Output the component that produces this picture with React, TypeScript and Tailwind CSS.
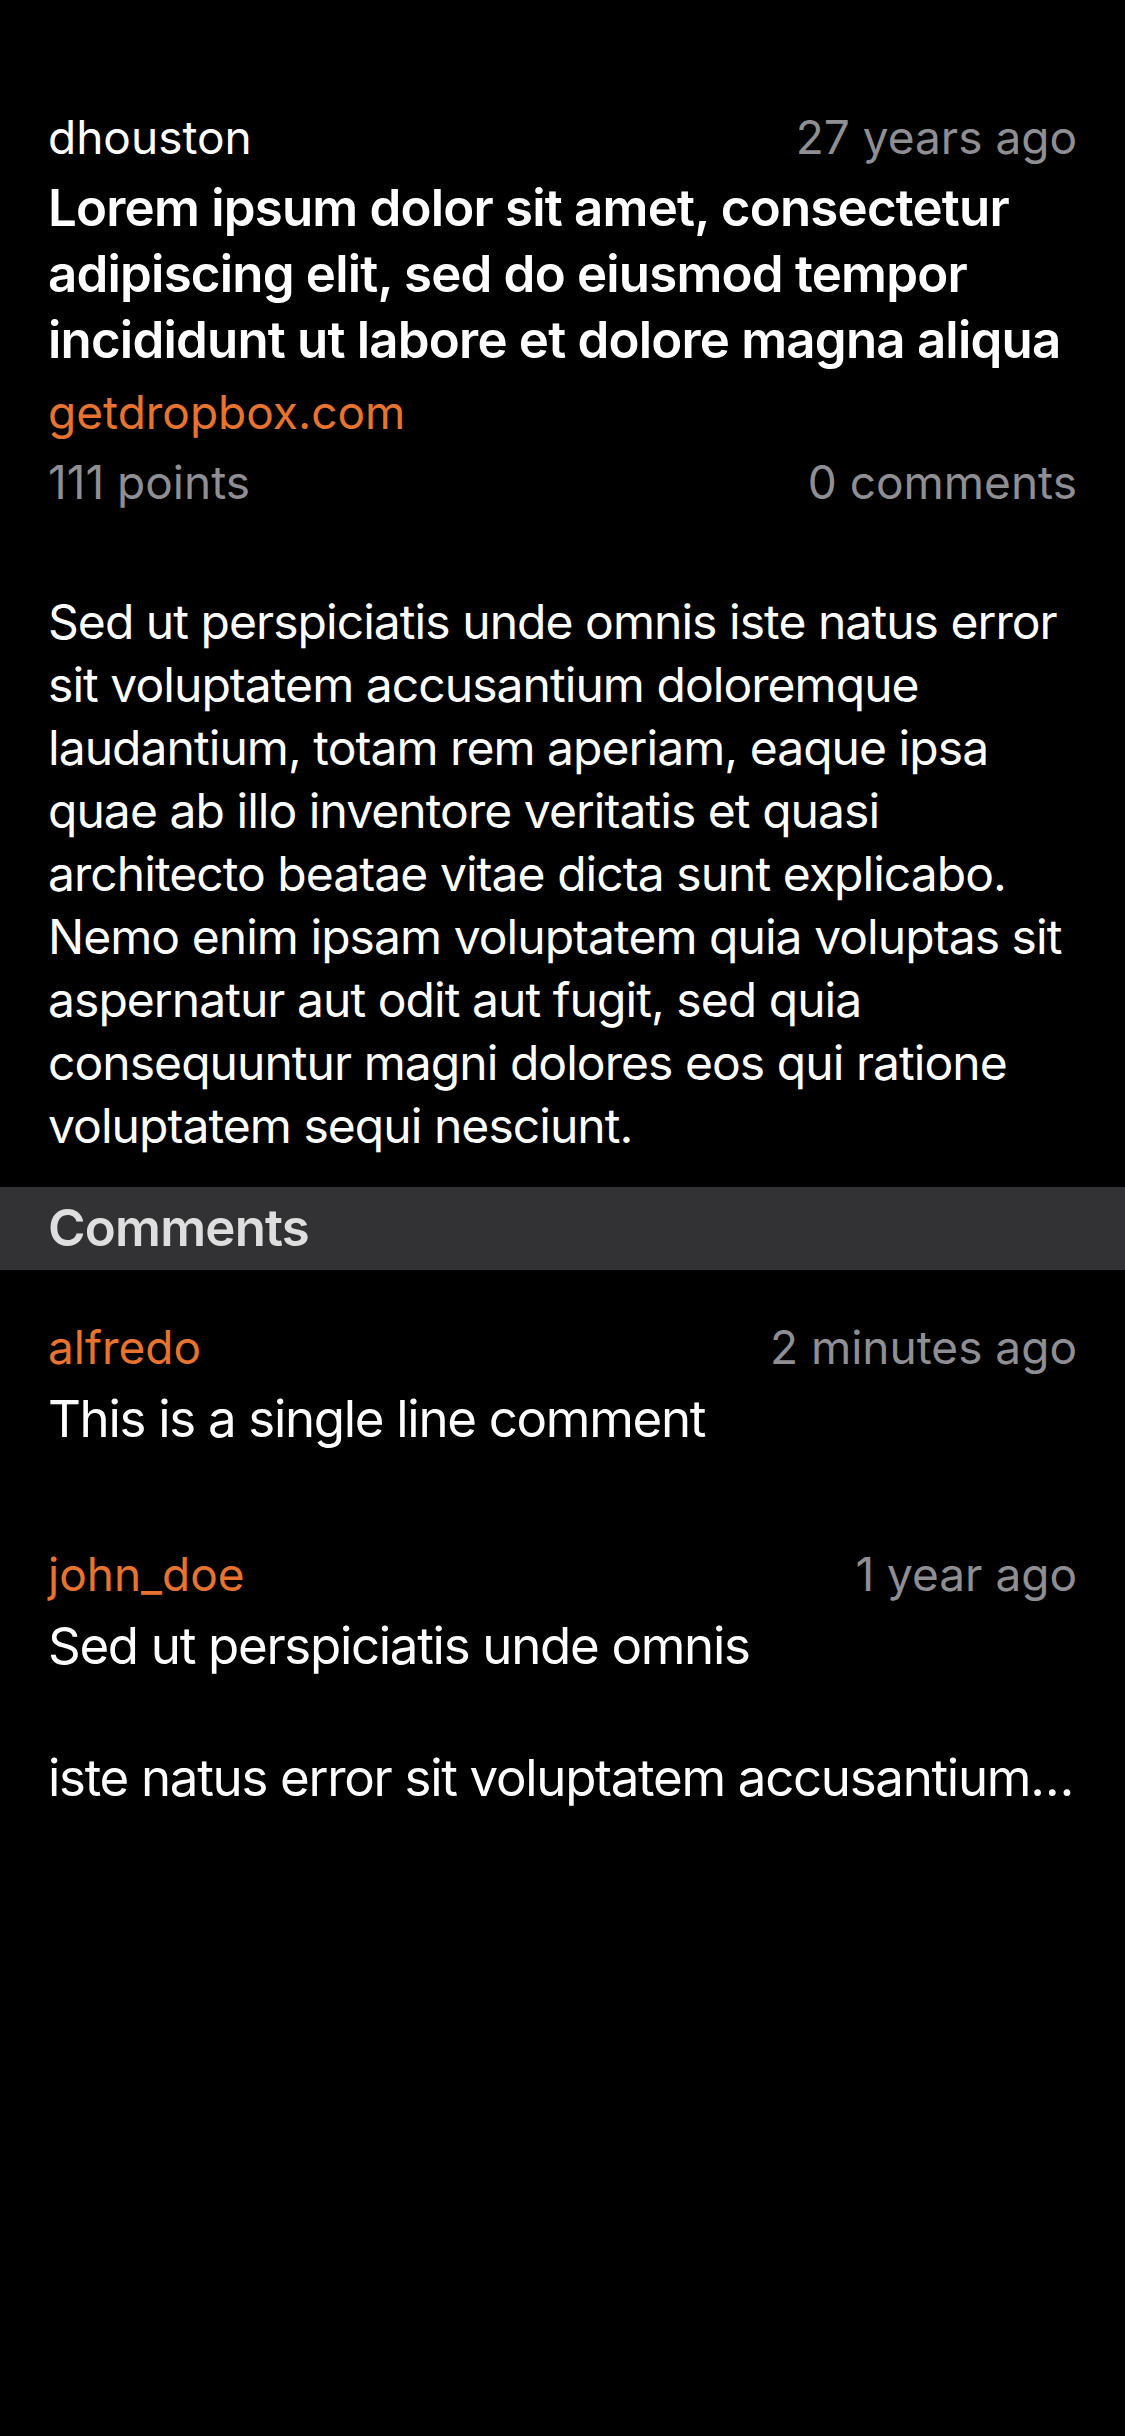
type Comment = {
  user: string;
  time: string;
  text: string;
};

const comments: Comment[] = [
  { user: "alfredo", time: "2 minutes ago", text: "This is a single line comment" },
  {
    user: "john_doe",
    time: "1 year ago",
    text: "Sed ut perspiciatis unde omnis\n\niste natus error sit voluptatem accusantium doloremque laudantium, totam rem aperiam",
  },
];

const body =
  "Sed ut perspiciatis unde omnis iste natus error sit voluptatem accusantium doloremque laudantium, totam rem aperiam, eaque ipsa quae ab illo inventore veritatis et quasi architecto beatae vitae dicta sunt explicabo. Nemo enim ipsam voluptatem quia voluptas sit aspernatur aut odit aut fugit, sed quia consequuntur magni dolores eos qui ratione voluptatem sequi nesciunt.";

export default function App() {
  return (
    <div className="min-h-[2436px] w-[1125px] bg-black font-['Inter',sans-serif] text-white antialiased">
      <article className="px-12 pt-[107px]">
        <div className="flex items-center justify-between text-[46px] leading-[60px]">
          <span className="text-white">dhouston</span>
          <span className="text-[#8e8e93]">27 years ago</span>
        </div>
        <h1 className="mt-2 text-[51px] font-semibold leading-[66px] tracking-[-0.8px]">
          Lorem ipsum dolor sit amet, consectetur adipiscing elit, sed do eiusmod tempor incididunt ut labore et dolore magna aliqua
        </h1>
        <p className="mt-[9px] text-[46px] leading-[60px] text-[#e8732e]">getdropbox.com</p>
        <div className="mt-[10px] flex items-center justify-between text-[46px] leading-[60px] text-[#8e8e93]">
          <span>111 points</span>
          <span>0 comments</span>
        </div>
        <p className="mt-[78px] text-[48px] leading-[63px] tracking-[-0.95px]">{body}</p>
      </article>

      <div className="mt-[30px] flex h-[83px] items-center bg-[#323234] px-12">
        <h2 className="text-[51px] font-semibold tracking-[-0.8px] text-[#dedede]">Comments</h2>
      </div>

      <ul className="px-12 pt-[47px]">
        {comments.map((c) => (
          <li key={c.user} className="mb-[92px]">
            <div className="flex items-center justify-between text-[46px] leading-[60px]">
              <span className="text-[#e8732e]">{c.user}</span>
              <span className="text-[#8e8e93]">{c.time}</span>
            </div>
            <p className="mt-[9px] line-clamp-3 whitespace-pre-line text-[51px] leading-[66px] tracking-[-1.3px]">
              {c.text}
            </p>
          </li>
        ))}
      </ul>
    </div>
  );
}
